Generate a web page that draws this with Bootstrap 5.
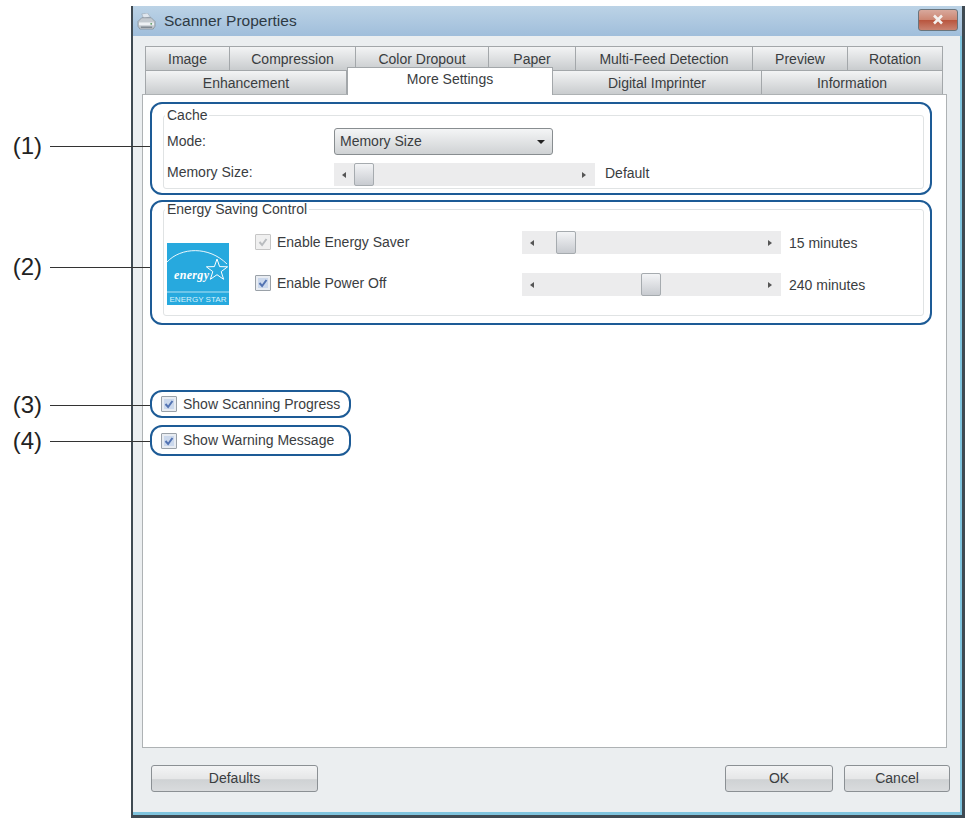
<!DOCTYPE html>
<html lang="en">
<head>
    <meta charset="UTF-8">
    <meta name="viewport" content="width=device-width, initial-scale=1.0">
    <title>Scanner Properties</title>
    <link rel="stylesheet" href="https://cdn.jsdelivr.net/npm/bootstrap@5.3.0/dist/css/bootstrap.min.css">
    <style>
        body { background: #fff; font-family: "Liberation Sans", Arial, sans-serif; font-size: 14px; color: #3a3d3f; }
        .dlg-window { width: 834px; height: 812px; margin: 6px 0 0 131px; background: #ebeef0; border: solid #3f4a52; border-width: 0 3px 3px 2px; box-shadow: inset -2px -3px 0 #7fc4de; }
        .dlg-title { height: 30px; padding: 0 4px 0 4px; background: linear-gradient(#bcd3e6, #a0bedb); font-size: 15.5px; color: #2e3a44; }
        .dlg-title-ico { margin-right: 8px; }
        .dlg-close { width: 40px; height: 22px; margin-top: -3px; background: linear-gradient(#d8a89c 0%, #cc8672 48%, #b9563f 52%, #c98371 100%); border: 1px solid #6a747b; border-radius: 3px; }
        .tab-area { padding: 10px 0 0 9px; }
        .tab-row { margin-left: 3px; width: 798px; border: 0; flex-wrap: nowrap; height: 24px; }
        .tab-row .nav-link { height: 24px; padding: 1px 0 0; width: 100%; text-align: center; color: #3a3d3f; background: linear-gradient(#f3f4f5, #c9ccce); border: 1px solid #a3a7aa; border-bottom: 0; border-left-width: 0; border-radius: 0; margin: 0; line-height: 22px; }
        .tab-row .nav-item:first-child .nav-link { border-left-width: 1px; }
        .tab-row .nav-link.active { height: 28px; margin-top: -3px; padding-top: 0; background: #fff; position: relative; z-index: 2; border-left-width: 1px; color: #3a3d3f; }
        .w-image { width: 85px; } .w-compr { width: 126px; } .w-color { width: 133px; } .w-paper { width: 87px; }
        .w-multi { width: 177px; } .w-prev { width: 95px; } .w-rot { width: 95px; }
        .w-enh { width: 202px; } .w-more { width: 206px; } .w-digi { width: 209px; } .w-info { width: 181px; }
        .dlg-panel { width: 805px; height: 654px; background: #fff; border: 1px solid #aeb2b4; padding: 7px 0 0 7px; }
        .callout { position: relative; border: 2px solid #1d5b96; border-radius: 12px; background: #fff; }
        .callout-cache { width: 782px; height: 93px; padding: 3px 6px 4px 11px; }
        .callout-energy { width: 782px; height: 125px; margin-top: 5px; padding: 0 6px 7px 11px; }
        .callout-scan { width: 201px; height: 28px; margin-top: 65px; padding-left: 9px; }
        .callout-warn { width: 201px; height: 31px; margin-top: 7px; padding-left: 9px; }
        .leader { position: absolute; left: -102px; width: 100px; border-top: 1px solid #333; }
        .leader span { position: absolute; right: 108px; top: -15px; font-size: 24px; line-height: 28px; color: #222; white-space: nowrap; }
        .callout-cache .leader { top: 42px; }
        .callout-energy .leader { top: 65px; }
        .callout-scan .leader { top: 13px; }
        .callout-warn .leader { top: 14px; }
        .grp { border: 1px solid #e0e3e4; border-radius: 3px; height: 100%; padding: 0 0 0 3px; margin: 0; min-width: 0; }
        .callout-energy .grp { margin-top: -1px; height: calc(100% + 1px); }
        .grp legend { float: none; width: auto; margin: 0 0 0 -2px; padding: 0 2px; font-size: 14px; line-height: 16px; color: #3a3d3f; }
        .lbl-col { width: 167px; margin-top: -3px; }
        .cache-mode { margin-top: 8px; }
        .mode-select { width: 219px; height: 27px; margin-top: -3px; padding: 0 7px 0 5px; font-size: 14px; color: #3a3d3f; background: linear-gradient(#f4f5f6, #cfd2d4); border: 1px solid #888d90; border-radius: 3px; }
        .mode-select:hover { background: linear-gradient(#f4f5f6, #cfd2d4); color: #3a3d3f; border-color: #888d90; }
        .mode-select::after { color: #222; margin: 0; }
        .hslider { height: 23px; background: #ececed; padding: 0 9px 0 8px; flex-shrink: 0; }
        .slider-mem { width: 261px; margin-top: 8px; }
        .slider-energy { width: 259px; }
        .arr-l { width: 0; height: 0; border: 3px solid transparent; border-right: 4px solid #555; border-left: 0; margin-right: 4px; }
        .arr-r { width: 0; height: 0; border: 3px solid transparent; border-left: 4px solid #555; border-right: 0; margin-left: auto; }
        .thumb { width: 20px; height: 23px; background: linear-gradient(#f3f4f6, #c8cbd0); border: 1px solid #a6abaf; border-radius: 2px; }
        .val-txt { margin-left: 8px; margin-top: 2px; }
        .val-default { margin-left: 10px; margin-top: 6px; }
        .star-logo { width: 62px; height: 62px; margin-top: 26px; flex-shrink: 0; }
        .chk-col { width: 267px; margin-left: 26px; padding-top: 13px; }
        .chk-row { height: 23px; }
        .chk-second { margin-top: 17px; }
        .energy-sliders { padding-top: 14px; }
        .energy-second { margin-top: 19px; }
        .form-check-input.chk { width: 16px; height: 16px; margin: 0 6px 0 0; flex-shrink: 0; border: 1px solid #9aa1a8; border-radius: 1px; background-color: #d3ddec; opacity: 1; background-size: 14px; box-shadow: inset 0 0 0 2px #e8ecf2; }
        .form-check-input.chk:checked { background-color: #cbd8ec; border-color: #9aa1a8; background-image: url("data:image/svg+xml,%3Csvg xmlns='http://www.w3.org/2000/svg' viewBox='0 0 14 14'%3E%3Cpath d='M3.5 7l2.6 3 4.4-6' fill='none' stroke='%235373b2' stroke-width='2'/%3E%3C/svg%3E"); }
        .form-check-input.chk:disabled { background-color: #f0f0f0; border-color: #c6c6c6; box-shadow: none; opacity: 1; background-image: url("data:image/svg+xml,%3Csvg xmlns='http://www.w3.org/2000/svg' viewBox='0 0 14 14'%3E%3Cpath d='M3.5 7l2.6 3 4.4-6' fill='none' stroke='%23b9bcbf' stroke-width='2'/%3E%3C/svg%3E"); }
        .form-check-input.chk:disabled ~ .form-check-label { opacity: 1; }
        .chk-row .form-check-label { color: #3a3d3f; }
        .dlg-foot { padding: 17px 12px 0 18px; }
        .dlg-btn { height: 27px; padding: 0; font-size: 14px; color: #3a3d3f; background: linear-gradient(#f3f4f5 0%, #e6e7e8 50%, #cfd2d4 55%, #d9dbdd 100%); border: 1px solid #8b9094; border-radius: 3px; }
        .dlg-btn:hover { color: #3a3d3f; background: linear-gradient(#f3f4f5 0%, #e6e7e8 50%, #cfd2d4 55%, #d9dbdd 100%); border-color: #8b9094; }
        .btn-def { width: 167px; } .btn-ok { width: 108px; } .btn-can { width: 106px; margin-left: 11px; }
    </style>
</head>
<body>
    <div class="dlg-window d-flex flex-column">
        <div class="dlg-title d-flex align-items-center">
            <svg class="dlg-title-ico" width="19" height="17" viewBox="0 0 20 18">
                <path d="M5 1l6-1 3 4-7 2z" fill="#dfe6ee" stroke="#9aa6b2" stroke-width=".6"/>
                <path d="M1 9l4-4h10l4 4v5l-2 3H3l-2-3z" fill="#c3c9cf" stroke="#7d858d" stroke-width=".7"/>
                <path d="M2 10h16v3H2z" fill="#eef1f4"/>
                <path d="M4 15h12" stroke="#5b646c"/>
                <circle cx="15" cy="11.5" r="1" fill="#5a9c62"/>
            </svg>
            <span>Scanner Properties</span>
            <div class="dlg-close ms-auto d-flex align-items-center justify-content-center">
                <svg width="12" height="11" viewBox="0 0 12 11"><path d="M2 1.5l8 8M10 1.5l-8 8" stroke="#f4f0ee" stroke-width="2.6"/></svg>
            </div>
        </div>

        <div class="tab-area">
            <ul class="nav tab-row">
                <li class="nav-item w-image"><a class="nav-link" href="#">Image</a></li>
                <li class="nav-item w-compr"><a class="nav-link" href="#">Compression</a></li>
                <li class="nav-item w-color"><a class="nav-link" href="#">Color Dropout</a></li>
                <li class="nav-item w-paper"><a class="nav-link" href="#">Paper</a></li>
                <li class="nav-item w-multi"><a class="nav-link" href="#">Multi-Feed Detection</a></li>
                <li class="nav-item w-prev"><a class="nav-link" href="#">Preview</a></li>
                <li class="nav-item w-rot"><a class="nav-link" href="#">Rotation</a></li>
            </ul>
            <ul class="nav tab-row">
                <li class="nav-item w-enh"><a class="nav-link" href="#">Enhancement</a></li>
                <li class="nav-item w-more"><a class="nav-link active" href="#">More Settings</a></li>
                <li class="nav-item w-digi"><a class="nav-link" href="#">Digital Imprinter</a></li>
                <li class="nav-item w-info"><a class="nav-link" href="#">Information</a></li>
            </ul>

            <div class="dlg-panel">
                <div class="callout callout-cache">
                    <div class="leader"><span>(1)</span></div>
                    <fieldset class="grp">
                        <legend>Cache</legend>
                        <div class="d-flex align-items-center cache-mode">
                            <div class="lbl-col">Mode:</div>
                            <button class="btn mode-select dropdown-toggle d-flex align-items-center justify-content-between" type="button">Memory Size</button>
                        </div>
                        <div class="d-flex align-items-center">
                            <div class="lbl-col mt-1">Memory Size:</div>
                            <div class="hslider slider-mem d-flex align-items-center">
                                <i class="arr-l"></i><span class="thumb ms-1"></span><i class="arr-r"></i>
                            </div>
                            <div class="val-default">Default</div>
                        </div>
                    </fieldset>
                </div>

                <div class="callout callout-energy">
                    <div class="leader"><span>(2)</span></div>
                    <fieldset class="grp d-flex">
                        <legend>Energy Saving Control</legend>
                        <svg class="star-logo" viewBox="0 0 62 62">
                            <rect width="62" height="62" fill="#27a9de"/>
                            <path d="M0 19C14 4 42 3 60 21" fill="none" stroke="#fff" stroke-width=".9"/>
                            <path d="M0 49h62" stroke="#d8f2fb" stroke-width=".8"/>
                            <text x="7" y="36" font-family="Liberation Serif, serif" font-style="italic" font-weight="bold" font-size="12" textLength="35" fill="#fff">energy</text>
                            <path d="M50 16l2.6 7.6 8 .2-6.4 4.8 2.4 7.7-6.6-4.6-6.6 4.6 2.4-7.7-6.4-4.8 8-.2z" fill="none" stroke="#fff" stroke-width="1"/>
                            <text x="31" y="59" text-anchor="middle" font-family="Liberation Sans, sans-serif" font-size="8" textLength="57" lengthAdjust="spacingAndGlyphs" fill="#d8f2fb">ENERGY STAR</text>
                        </svg>
                        <div class="chk-col">
                            <div class="form-check chk-row d-flex align-items-center p-0">
                                <input class="form-check-input chk" type="checkbox" checked disabled id="chkSaver">
                                <label class="form-check-label" for="chkSaver">Enable Energy Saver</label>
                            </div>
                            <div class="form-check chk-row d-flex align-items-center p-0 chk-second">
                                <input class="form-check-input chk" type="checkbox" checked id="chkOff">
                                <label class="form-check-label" for="chkOff">Enable Power Off</label>
                            </div>
                        </div>
                        <div class="energy-sliders">
                            <div class="d-flex align-items-center">
                                <div class="hslider slider-energy d-flex align-items-center">
                                    <i class="arr-l"></i><span class="thumb" style="margin-left: 18px"></span><i class="arr-r"></i>
                                </div>
                                <div class="val-txt">15 minutes</div>
                            </div>
                            <div class="d-flex align-items-center energy-second">
                                <div class="hslider slider-energy d-flex align-items-center">
                                    <i class="arr-l"></i><span class="thumb" style="margin-left: 103px"></span><i class="arr-r"></i>
                                </div>
                                <div class="val-txt">240 minutes</div>
                            </div>
                        </div>
                    </fieldset>
                </div>

                <div class="callout callout-scan d-flex align-items-center">
                    <div class="leader"><span>(3)</span></div>
                    <input class="form-check-input chk" type="checkbox" checked id="chkScan">
                    <label class="form-check-label" for="chkScan">Show Scanning Progress</label>
                </div>
                <div class="callout callout-warn d-flex align-items-center">
                    <div class="leader"><span>(4)</span></div>
                    <input class="form-check-input chk" type="checkbox" checked id="chkWarn">
                    <label class="form-check-label" for="chkWarn">Show Warning Message</label>
                </div>
            </div>
        </div>

        <div class="dlg-foot d-flex">
            <button class="btn dlg-btn btn-def" type="button">Defaults</button>
            <button class="btn dlg-btn btn-ok ms-auto" type="button">OK</button>
            <button class="btn dlg-btn btn-can" type="button">Cancel</button>
        </div>
    </div>

    <script src="https://cdn.jsdelivr.net/npm/bootstrap@5.3.0/dist/js/bootstrap.bundle.min.js"></script>
</body>
</html>
